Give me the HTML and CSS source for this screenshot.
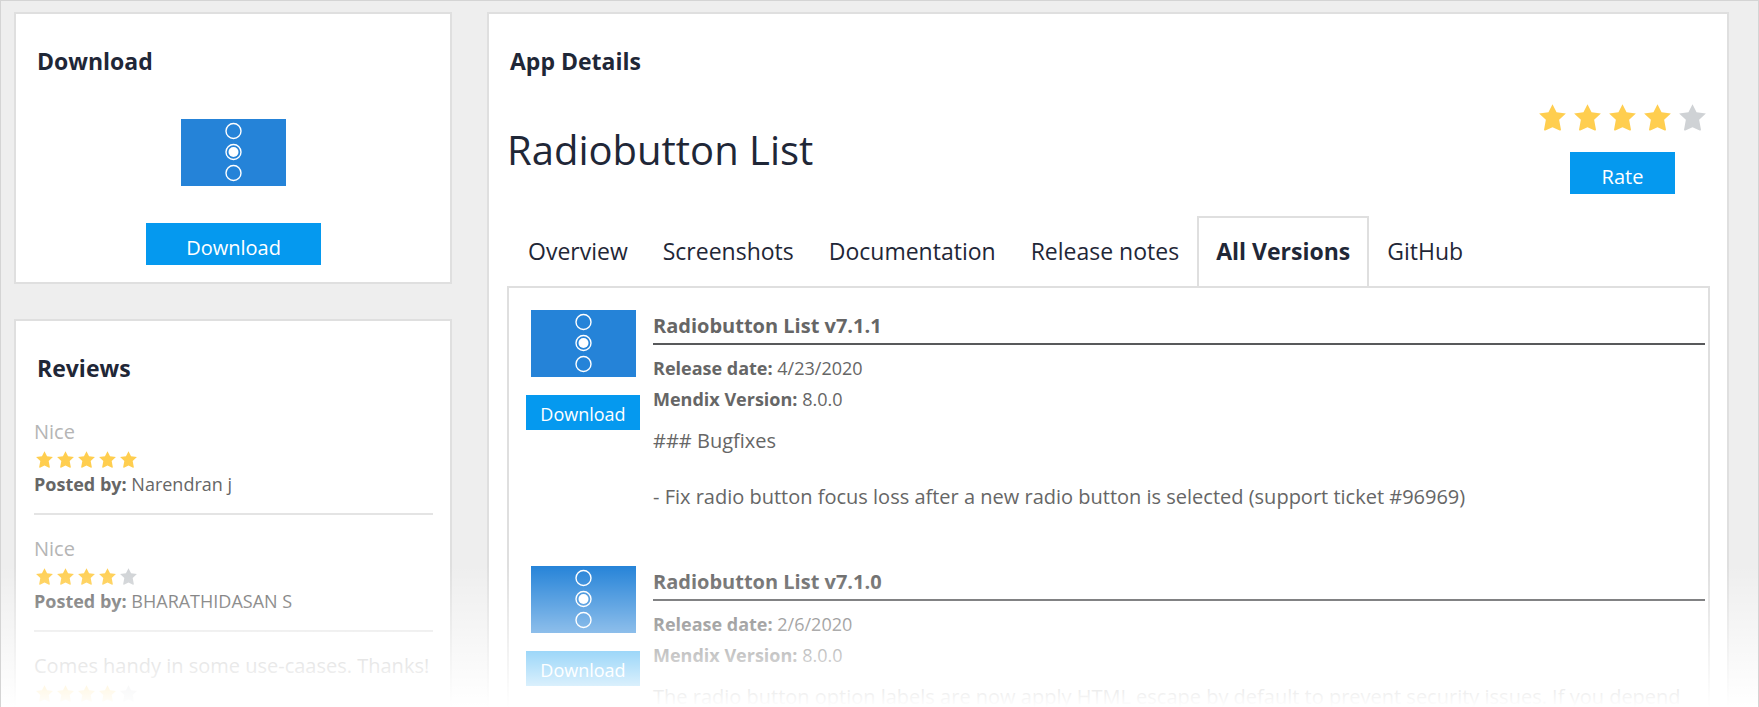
FILE: index.html
```html
<!DOCTYPE html>
<html lang="en">
<head>
<meta charset="utf-8">
<title>Radiobutton List</title>
<link rel="stylesheet" href="styles.css">
</head>
<body>
<svg class="defs" aria-hidden="true">
  <symbol id="star" viewBox="0 0 24 24"><path d="M12 .2l3.600 7.200 8.300 1-6 5.700 1.600 8.600c.1.700-.5 1.100-1.100.8L12 20.600l-6.400 2.900c-.6.3-1.200-.1-1.100-.8l1.600-8.600L.1 8.400l8.300-1z"/></symbol>
  <symbol id="radios" viewBox="0 0 105 67">
    <rect width="105" height="67" fill="#2583d8"/>
    <g fill="none" stroke="#fff" stroke-width="1.400">
      <circle cx="52.500" cy="12" r="7.500"/><circle cx="52.500" cy="33" r="7.500"/><circle cx="52.500" cy="54" r="7.500"/>
    </g>
    <circle cx="52.500" cy="33" r="5" fill="#fff"/>
  </symbol>
</svg>
<div class="page">
  <aside class="side">
    <section class="card download-card">
      <h2 class="card-title">Download</h2>
      <svg class="thumb"><use href="#radios"/></svg>
      <button class="btn btn-wide" type="button">Download</button>
    </section>
    <section class="card">
      <h2 class="card-title">Reviews</h2>
      <ul class="reviews">
        <li class="review">
          <p class="comment">Nice</p>
          <div class="stars" role="img" aria-label="5 of 5 stars"><svg><use href="#star"/></svg><svg><use href="#star"/></svg><svg><use href="#star"/></svg><svg><use href="#star"/></svg><svg><use href="#star"/></svg></div>
          <p class="author"><b>Posted by:</b> Narendran j</p>
        </li>
        <li class="review">
          <p class="comment">Nice</p>
          <div class="stars" role="img" aria-label="4 of 5 stars"><svg><use href="#star"/></svg><svg><use href="#star"/></svg><svg><use href="#star"/></svg><svg><use href="#star"/></svg><svg class="off"><use href="#star"/></svg></div>
          <p class="author"><b>Posted by:</b> BHARATHIDASAN S</p>
        </li>
        <li class="review">
          <p class="comment">Comes handy in some use-caases. Thanks!</p>
          <div class="stars" role="img" aria-label="4 of 5 stars"><svg><use href="#star"/></svg><svg><use href="#star"/></svg><svg><use href="#star"/></svg><svg><use href="#star"/></svg><svg class="off"><use href="#star"/></svg></div>
        </li>
      </ul>
    </section>
  </aside>
  <main class="card details">
    <h2 class="card-title">App Details</h2>
    <header class="app-head">
      <h1 class="app-name">Radiobutton List</h1>
      <div class="rating">
        <div class="stars stars-large" role="img" aria-label="4 of 5 stars"><svg><use href="#star"/></svg><svg><use href="#star"/></svg><svg><use href="#star"/></svg><svg><use href="#star"/></svg><svg class="off"><use href="#star"/></svg></div>
        <button class="btn btn-rate" type="button">Rate</button>
      </div>
    </header>
    <nav class="tabs">
      <a class="tab" href="#overview">Overview</a>
      <a class="tab" href="#screenshots">Screenshots</a>
      <a class="tab" href="#documentation">Documentation</a>
      <a class="tab" href="#notes">Release notes</a>
      <a class="tab active" href="#versions" aria-current="page">All Versions</a>
      <a class="tab" href="#github">GitHub</a>
    </nav>
    <div class="panel" id="versions">
      <article class="version">
        <div class="version-side">
          <svg class="thumb"><use href="#radios"/></svg>
          <button class="btn btn-small" type="button">Download</button>
        </div>
        <div class="version-body">
          <h3 class="version-title">Radiobutton List v7.1.1</h3>
          <p class="meta"><b>Release date:</b> 4/23/2020</p>
          <p class="meta"><b>Mendix Version:</b> 8.0.0</p>
          <p class="notes">### Bugfixes<br><br>- Fix radio button focus loss after a new radio button is selected (support ticket #96969)</p>
        </div>
      </article>
      <article class="version">
        <div class="version-side">
          <svg class="thumb"><use href="#radios"/></svg>
          <button class="btn btn-small" type="button">Download</button>
        </div>
        <div class="version-body">
          <h3 class="version-title">Radiobutton List v7.1.0</h3>
          <p class="meta"><b>Release date:</b> 2/6/2020</p>
          <p class="meta"><b>Mendix Version:</b> 8.0.0</p>
          <p class="notes">The radio button option labels are now apply HTML escape by default to prevent security issues. If you depend</p>
        </div>
      </article>
    </div>
  </main>
  <div class="fade"></div>
</div>
</body>
</html>
```
FILE: styles.css
```css
* { box-sizing: border-box; margin: 0; padding: 0; }
body { background: #fff; color: #666; font-family: "Segoe UI", "Open Sans", "Noto Sans", sans-serif; font-size: 20px; line-height: 28px; }
.defs { position: absolute; width: 0; height: 0; }
.page { position: relative; display: grid; grid-template-columns: minmax(0, 438fr) minmax(0, 1242fr); gap: 35px; height: 100vh; overflow: hidden; padding: 11px 29px 0 13px; background: #eee; border: 1px solid #d4d4d4; border-bottom: 0; }
.fade { position: absolute; inset: auto -1px 0 -1px; height: 142px; background: linear-gradient(rgba(255, 255, 255, 0), #fff); pointer-events: none; }
.side { display: flex; flex-direction: column; gap: 35px; }
.card { background: #fff; border: 2px solid #dfdfdf; padding: 31px 17px 17px 18px; }
.card-title { padding-left: 3px; color: #1f2737; font-size: 23px; line-height: 32px; font-weight: 700; }
.download-card { display: flex; flex-direction: column; align-items: center; }
.download-card .card-title { align-self: stretch; }
.download-card .thumb { margin: 42px 0 37px; }
.thumb { display: block; width: 105px; height: 67px; }
.btn { border: 0; background: #0599ef; color: #fff; font-family: inherit; font-size: 20px; line-height: 28px; padding: 11px 8px 3px; cursor: pointer; }
.btn-wide { width: 175px; }
.btn-rate { width: 105px; margin-right: 35px; }
.btn-small { width: 114px; font-size: 18px; line-height: 24px; padding: 7px 4px 4px; }
.reviews { list-style: none; margin-top: 34px; }
.review { padding-bottom: 17px; margin-bottom: 20px; border-bottom: 2px solid #e4e4e4; }
.comment { color: #b5b5b5; }
.stars { display: flex; gap: 4px; padding: 5px 2px 4px; fill: #ffce4f; }
.stars svg { width: 17px; height: 17px; }
.stars .off { fill: #cfd2d5; }
.author { font-size: 18px; line-height: 24px; }
.app-head { display: flex; justify-content: space-between; align-items: flex-start; height: 139px; }
.app-name { padding-top: 45px; color: #1f2737; font-size: 40px; line-height: 56px; font-weight: 400; }
.rating { display: flex; flex-direction: column; align-items: flex-end; padding-top: 27px; }
.stars-large { gap: 8px; padding: 0 4px 21px; }
.stars-large svg { width: 27px; height: 27px; }
.tabs { display: flex; gap: 1px; padding-left: 4px; }
.tab { padding: 15px 17px 17px; border-top: 2px solid transparent; color: #1f2737; font-size: 23px; line-height: 36px; text-decoration: none; white-space: nowrap; }
.active { border: 2px solid #dfdfdf; border-bottom: 0; font-weight: 700; }
.panel { border: 2px solid #dfdfdf; padding: 22px 3px 0 17px; }
.version { display: flex; gap: 13px; margin-bottom: 55px; }
.version-side { display: flex; flex-direction: column; align-items: center; gap: 18px; }
.version-body { flex: 1; min-width: 0; }
.version-title { padding-bottom: 2px; border-bottom: 2px solid #58595b; margin-bottom: 8px; font-size: 20px; line-height: 31px; font-weight: 700; }
.meta { font-size: 18px; line-height: 31px; }
.notes { margin-top: 12px; }
```
